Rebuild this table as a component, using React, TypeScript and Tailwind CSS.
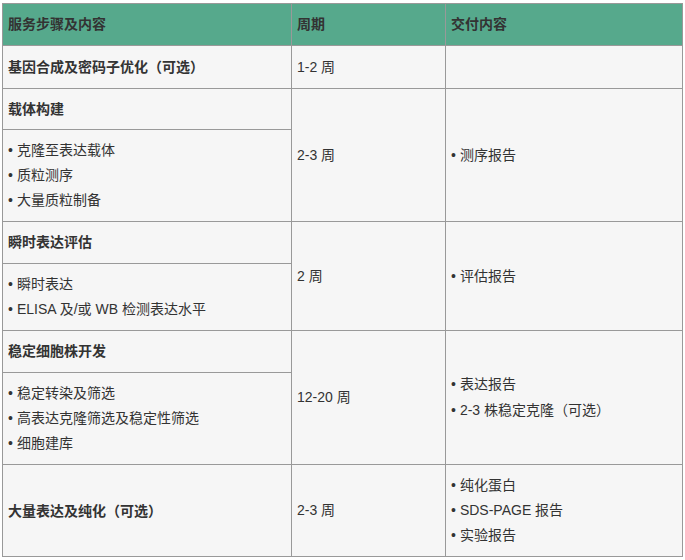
import React from "react";

const font = { fontFamily: '"Liberation Sans", "Noto Sans CJK SC", sans-serif' };

function P({ children }: { children: React.ReactNode }) {
  return <span style={{ fontFamily: '"Noto Sans CJK TC", sans-serif' }}>{children}</span>;
}

function Opt() {
  return (
    <>
      <P>（</P>可选<P>）</P>
    </>
  );
}

function Bullets({ items }: { items: React.ReactNode[] }) {
  return (
    <div className="flex flex-col">
      {items.map((t, i) => (
        <div key={i} className="leading-[25px]">
          <span className="mr-[4px]">•</span>
          {t}
        </div>
      ))}
    </div>
  );
}

const td = "border border-[#999999] bg-[#f6f6f6] align-middle px-[5px] py-0";

export default function App() {
  return (
    <div className="bg-white w-[685px] h-[560px] pt-[3px] pl-[2px]" style={font}>
      <table className="border-collapse w-[680px] table-fixed text-[14px] text-[#333333]">
        <colgroup>
          <col className="w-[289px]" />
          <col className="w-[154px]" />
          <col className="w-[237px]" />
        </colgroup>
        <tbody>
          <tr className="h-[42px]">
            <td className="border border-[#999999] bg-[#56a98c] align-middle px-[5px] font-bold">服务步骤及内容</td>
            <td className="border border-[#999999] bg-[#56a98c] align-middle px-[5px] font-bold">周期</td>
            <td className="border border-[#999999] bg-[#56a98c] align-middle px-[5px] font-bold">交付内容</td>
          </tr>
          <tr className="h-[43px]">
            <td className={`${td} font-bold`}>基因合成及密码子优化<Opt /></td>
            <td className={td}>1-2 周</td>
            <td className={td}></td>
          </tr>
          <tr className="h-[41px]">
            <td className={`${td} font-bold`}>载体构建</td>
            <td className={td} rowSpan={2}>2-3 周</td>
            <td className={td} rowSpan={2}>
              <Bullets items={["测序报告"]} />
            </td>
          </tr>
          <tr className="h-[92px]">
            <td className={td}>
              <Bullets items={["克隆至表达载体", "质粒测序", "大量质粒制备"]} />
            </td>
          </tr>
          <tr className="h-[42px]">
            <td className={`${td} font-bold`}>瞬时表达评估</td>
            <td className={td} rowSpan={2}>2 周</td>
            <td className={td} rowSpan={2}>
              <Bullets items={["评估报告"]} />
            </td>
          </tr>
          <tr className="h-[67px]">
            <td className={td}>
              <Bullets items={["瞬时表达", "ELISA 及/或 WB 检测表达水平"]} />
            </td>
          </tr>
          <tr className="h-[42px]">
            <td className={`${td} font-bold`}>稳定细胞株开发</td>
            <td className={td} rowSpan={2}>12-20 周</td>
            <td className={td} rowSpan={2}>
              <Bullets items={["表达报告", <>2-3 株稳定克隆<Opt /></>]} />
            </td>
          </tr>
          <tr className="h-[92px]">
            <td className={td}>
              <Bullets items={["稳定转染及筛选", "高表达克隆筛选及稳定性筛选", "细胞建库"]} />
            </td>
          </tr>
          <tr className="h-[92px]">
            <td className={`${td} font-bold`}>大量表达及纯化<Opt /></td>
            <td className={td}>2-3 周</td>
            <td className={td}>
              <Bullets items={["纯化蛋白", "SDS-PAGE 报告", "实验报告"]} />
            </td>
          </tr>
        </tbody>
      </table>
    </div>
  );
}
